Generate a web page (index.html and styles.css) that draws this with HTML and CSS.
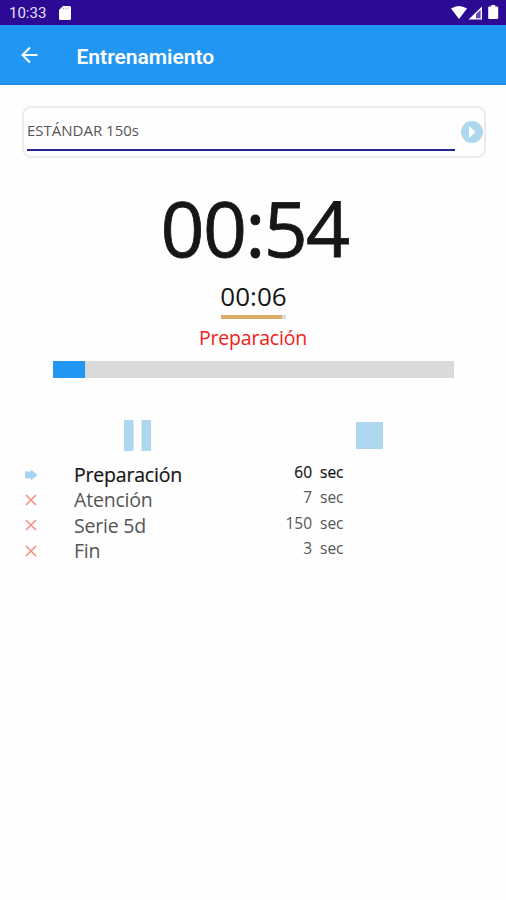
FILE: index.html
```
<!DOCTYPE html>
<html lang="es">
<head>
  <meta charset="UTF-8">
  <meta name="viewport" content="width=device-width, initial-scale=1.0">
  <title>Entrenamiento</title>
  <link rel="stylesheet" href="styles.css">
</head>
<body>
  <div class="status-bar">
    <span class="clock">10:33</span>
    <svg class="sd-icon" width="12" height="14" viewBox="0 0 12 14">
      <path d="M4 0h6.500a1.500 1.500 0 0 1 1.500 1.500v11a1.500 1.500 0 0 1-1.500 1.500h-9a1.500 1.500 0 0 1-1.500-1.500V4z" fill="#fff"/>
      <path d="M4.500 1.500v2M6.700 1.500v2M8.900 1.500v2" stroke="#b9aee0" stroke-width="1"/>
    </svg>
    <svg class="status-icons" width="48" height="16" viewBox="0 0 48 16">
      <path d="M0 3.500Q8 -1.500 16 3.500L8 14z" fill="#fff"/>
      <path d="M17.500 14.500L31 1.500v13z" fill="#fff"/>
      <path d="M25 9.200L29.600 4.800v8.400H25z" fill="#2d0a94" opacity=".75"/>
      <path d="M38.200 1.500h2V0h4v1.500h2a1 1 0 0 1 1 1V13a1 1 0 0 1-1 1h-8a1 1 0 0 1-1-1V2.500a1 1 0 0 1 1-1z" fill="#fff"/>
    </svg>
  </div>
  <header class="app-bar">
    <svg class="back" width="18" height="18" viewBox="0 0 18 18">
      <path d="M16.500 9H2M9 1.500L1.500 9L9 16.500" fill="none" stroke="#fff" stroke-width="2"/>
    </svg>
    <h1>Entrenamiento</h1>
  </header>

  <main>
    <div class="selector">
      <div class="selector-name">ESTÁNDAR 150s</div>
      <svg width="22" height="22" viewBox="0 0 22 22">
        <circle cx="11" cy="11" r="11" fill="#aed6ef"/>
        <path d="M8 5v12l6.500-6z" fill="#fff"/>
      </svg>
    </div>

    <div class="timer">00:54</div>
    <div class="elapsed">00:06</div>
    <div class="elapsed-bar"><div class="elapsed-fill"></div></div>
    <div class="phase">Preparación</div>
    <div class="progress"><div class="progress-fill"></div></div>

    <div class="controls">
      <svg class="pause" width="27" height="31" viewBox="0 0 27 31">
        <path d="M0 0h9.500v31H0zM17.500 0H27v31h-9.500z" fill="#aed6ef"/>
      </svg>
      <div class="stop"></div>
    </div>

    <ul class="steps">
      <li class="current">
        <svg width="14" height="12" viewBox="0 0 14 12"><path d="M1 2.500h6V.500L13.500 6L7 11.500V9.500H1z" fill="#a5d3f2"/></svg>
        <span class="name">Preparación</span>
        <span class="secs">60</span>
        <span class="unit">sec</span>
      </li>
      <li>
        <svg width="14" height="12" viewBox="0 0 14 12"><path d="M2 1l10 10M12 1L2 11" stroke="#f28b82" stroke-width="1.500"/></svg>
        <span class="name">Atención</span>
        <span class="secs">7</span>
        <span class="unit">sec</span>
      </li>
      <li>
        <svg width="14" height="12" viewBox="0 0 14 12"><path d="M2 1l10 10M12 1L2 11" stroke="#f28b82" stroke-width="1.500"/></svg>
        <span class="name">Serie 5d</span>
        <span class="secs">150</span>
        <span class="unit">sec</span>
      </li>
      <li>
        <svg width="14" height="12" viewBox="0 0 14 12"><path d="M2 1l10 10M12 1L2 11" stroke="#f28b82" stroke-width="1.500"/></svg>
        <span class="name">Fin</span>
        <span class="secs">3</span>
        <span class="unit">sec</span>
      </li>
    </ul>
  </main>
</body>
</html>
```
FILE: styles.css
```
* {
  box-sizing: border-box;
}

body {
  margin: 0;
  background-color: #fefefe;
  color: #161616;
  font-family: 'Open Sans', 'Noto Sans', sans-serif;
}

.status-bar {
  display: flex;
  height: 25px;
  padding: 0 7px 0 9px;
  background-color: #2d0a94;
  color: #e6e1f6;
  font-family: Roboto, sans-serif;
  font-size: 15px;
  line-height: 27px;
}

.clock {
  width: 50px;
}

.sd-icon {
  margin-top: 6px;
}

.status-icons {
  margin: 5px 0 0 auto;
}

.app-bar {
  display: flex;
  align-items: center;
  height: 60px;
  padding: 2px 21px 0;
  background-color: #2196f3;
  border-bottom: 1px solid #1787e8;
  color: #ffffff;
}

.back {
  margin-top: -1px;
}

.app-bar h1 {
  margin: 2px 0 0 37.5px;
  font-family: Roboto, sans-serif;
  font-size: 21px;
  font-weight: 600;
}

main {
  display: flex;
  flex-direction: column;
  align-items: center;
  padding-top: 21px;
}

.selector {
  display: flex;
  justify-content: space-between;
  width: 464px;
  height: 52px;
  margin-left: 2px;
  padding: 0 1px 0 3px;
  border: 2px solid #ebebeb;
  border-radius: 9px;
}

.selector-name {
  width: 428px;
  height: 43px;
  border-bottom: 2px solid #20288f;
  color: #555555;
  font-size: 15px;
  line-height: 44px;
}

.selector svg {
  margin-top: 13px;
}

.timer {
  height: 104px;
  margin: 18px 0 0 3px;
  font-size: 77px;
  line-height: 104px;
  letter-spacing: -1.7px;
  -webkit-text-stroke: 0.8px #161616;
}

.elapsed {
  height: 36px;
  margin: -2px 0 0 1px;
  font-size: 26px;
  line-height: 36px;
}

.elapsed-bar {
  width: 65px;
  height: 4px;
  margin-top: 1px;
  background-color: #d5dae2;
}

.elapsed-fill {
  width: 95%;
  height: 100%;
  background-color: #d9ac67;
}

.phase {
  height: 28px;
  margin-top: 5px;
  color: #f32020;
  font-size: 19.5px;
  letter-spacing: -0.2px;
  line-height: 28px;
}

.progress {
  width: 401px;
  height: 17px;
  margin-top: 9px;
  background-color: #dadada;
}

.progress-fill {
  width: 8.2%;
  height: 100%;
  background-color: #2196f3;
}

.controls {
  display: flex;
  width: 259px;
  height: 31px;
  margin-top: 42px;
  align-items: center;
  justify-content: space-between;
}

.stop {
  width: 27px;
  height: 27px;
  background-color: #aed6ef;
}

.steps {
  align-self: stretch;
  margin: 11px 0 0;
  padding: 0 0 0 24px;
  list-style: none;
}

.steps li {
  display: flex;
  height: 25.3px;
  align-items: center;
  color: #555555;
}

.steps .name {
  width: 210px;
  margin-left: 36px;
  font-size: 19.5px;
  letter-spacing: -0.2px;
}

.steps .secs,
.steps .unit {
  margin-top: -5px;
  font-size: 15.5px;
}

.steps .secs {
  width: 28px;
  text-align: right;
}

.steps .unit {
  margin-left: 8px;
}

.steps .current {
  color: #161616;
  -webkit-text-stroke: 0.2px #161616;
}
```
